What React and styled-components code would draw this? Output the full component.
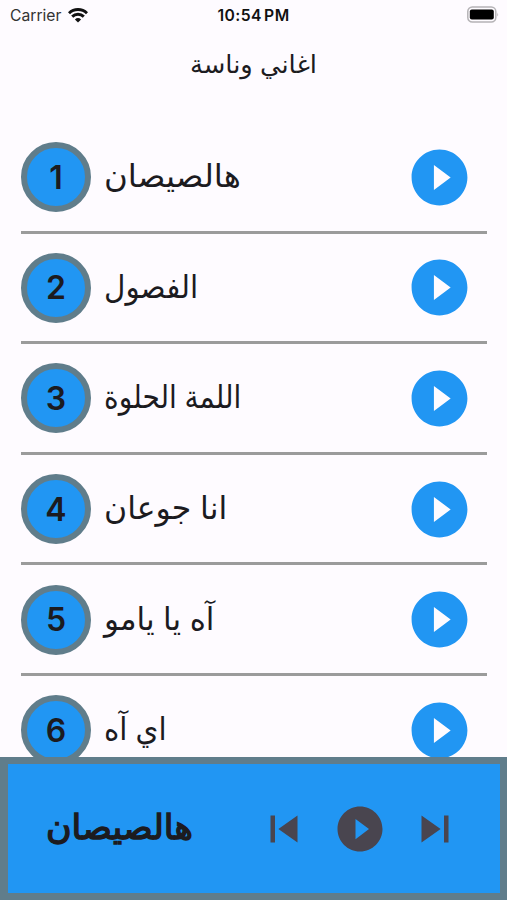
import React, { useState } from "react";
import styled, { createGlobalStyle } from "styled-components";

const GlobalStyle = createGlobalStyle`
  * {
    box-sizing: border-box;
  }

  body {
    margin: 0;
    background-color: #fefbff;
  }
`;

const Screen = styled.div`
  display: flex;
  flex-direction: column;
  width: 507px;
  height: 900px;
  overflow: hidden;
  background-color: #fefbff;
  color: #1c1b1f;
  font-family: "Liberation Sans", "DejaVu Sans", sans-serif;
`;

const StatusBar = styled.div`
  display: grid;
  grid-template-columns: 1fr auto 1fr;
  align-items: center;
  flex: none;
  height: 30px;
  padding: 0 8px 0 10px;
  color: #111;
  font-family: Inter, sans-serif;
`;

const Carrier = styled.div`
  display: flex;
  align-items: center;
  gap: 7px;
  font-size: 15.7px;
  color: #333;
`;

const Clock = styled.div`
  margin-right: 2px;
  font-size: 15.7px;
  font-weight: 600;
  letter-spacing: 0.4px;
  word-spacing: -2px;
`;

const Battery = styled.svg`
  justify-self: end;
  margin-top: -2px;
`;

const Header = styled.h1`
  flex: none;
  height: 93px;
  margin: 0;
  padding-top: 15px;
  font-size: 25px;
  line-height: 38px;
  font-weight: normal;
  text-align: center;
  transform: scaleX(1.03);
`;

const SongList = styled.ul`
  flex: 1;
  min-height: 0;
  margin: 0;
  padding: 0 20px 0 21px;
  overflow: hidden;
  list-style: none;
`;

const SongRow = styled.li`
  display: flex;
  align-items: center;
  height: 110.6px;
  padding: 1px 14px 0 0;
  border-bottom: 3px solid #9b9b9b;
`;

const Number = styled.div`
  display: flex;
  align-items: center;
  justify-content: center;
  flex: none;
  width: 70px;
  height: 70px;
  border: 6px solid #607d8b;
  border-radius: 50%;
  background-color: #2196f3;
  font-family: Inter, sans-serif;
  font-size: 32px;
  font-weight: 600;
`;

const SongName = styled.div`
  flex: 1;
  margin-left: 13px;
  padding-bottom: 2px;
  font-size: 32px;
  line-height: 50px;
  white-space: nowrap;
  transform: scaleX(${(props) => props.$stretch});
  transform-origin: left;
`;

const IconButton = styled.button`
  display: flex;
  flex: none;
  padding: 0;
  border: none;
  background: none;
  color: ${(props) => props.$color};
  cursor: pointer;
`;

const Player = styled.div`
  display: flex;
  align-items: center;
  flex: none;
  height: 143px;
  padding: 0 38px;
  border: 7px solid #607d8b;
  border-left-width: 8px;
  background-color: #2196f3;
`;

const NowPlaying = styled.div`
  flex: 1;
  padding-bottom: 4px;
  font-size: 34px;
  line-height: 50px;
  white-space: nowrap;
  -webkit-text-stroke: 1.4px #1c1b1f;
  transform: scaleX(1.025);
  transform-origin: left;
`;

const Controls = styled.div`
  display: flex;
  align-items: center;
  gap: 21.5px;
`;

const songs = [
  { name: "هالصيصان", stretch: 1.015 },
  { name: "الفصول", stretch: 0.92 },
  { name: "اللمة الحلوة", stretch: 0.875 },
  { name: "انا جوعان", stretch: 0.985 },
  { name: "آه يا يامو", stretch: 0.965 },
  { name: "اي آه", stretch: 0.915 },
];

const icons = {
  play: "M12 2C6.48 2 2 6.48 2 12s4.48 10 10 10 10-4.48 10-10S17.52 2 12 2zm-2 14.5v-9l6 4.5-6 4.5z",
  previous: "M6 6h2v12H6zm3.5 6l8.5 6V6z",
  next: "M6 18l8.5-6L6 6v12zM16 6v12h2V6h-2z",
};

function Icon({ name, size }) {
  return (
    <svg width={size} height={size} viewBox="0 0 24 24" fill="currentColor">
      <path d={icons[name]} />
    </svg>
  );
}

function WifiIcon() {
  return (
    <svg width="20" height="15" viewBox="0 0 20 15" fill="none" stroke="#111" strokeWidth="2.9">
      <path d="M1 5.2a12.8 12.8 0 0 1 18 0" />
      <path d="M4.2 8.6a8.2 8.2 0 0 1 11.6 0" />
      <path d="M10 14.6l-3.1-3.2a4.5 4.5 0 0 1 6.2 0z" fill="#111" stroke="none" />
    </svg>
  );
}

function App() {
  const [current, setCurrent] = useState(0);

  const step = (offset) => {
    setCurrent((current + offset + songs.length) % songs.length);
  };

  return (
    <Screen>
      <GlobalStyle />
      <StatusBar>
        <Carrier>
          Carrier
          <WifiIcon />
        </Carrier>
        <Clock>10:54 PM</Clock>
        <Battery width="32" height="17" viewBox="0 0 32 17">
          <rect x="0.8" y="1" width="28" height="15" rx="4.5" fill="none" stroke="#b5b3b6" strokeWidth="1.5" />
          <rect x="2.8" y="3.5" width="24" height="10" rx="2" fill="#000" />
          <path d="M30.3 6.5q1.5 2 0 4z" fill="#b5b3b6" />
        </Battery>
      </StatusBar>
      <Header dir="auto">اغاني وناسة</Header>
      <SongList>
        {songs.map((song, index) => (
          <SongRow key={song.name}>
            <Number>{index + 1}</Number>
            <SongName $stretch={song.stretch}>{song.name}</SongName>
            <IconButton $color="#2196f3" onClick={() => setCurrent(index)}>
              <Icon name="play" size={67} />
            </IconButton>
          </SongRow>
        ))}
      </SongList>
      <Player>
        <NowPlaying>{songs[current].name}</NowPlaying>
        <Controls>
          <IconButton $color="#49454f" onClick={() => step(-1)}>
            <Icon name="previous" size={54} />
          </IconButton>
          <IconButton $color="#49454f">
            <Icon name="play" size={54} />
          </IconButton>
          <IconButton $color="#49454f" onClick={() => step(1)}>
            <Icon name="next" size={54} />
          </IconButton>
        </Controls>
      </Player>
    </Screen>
  );
}

export default App;
